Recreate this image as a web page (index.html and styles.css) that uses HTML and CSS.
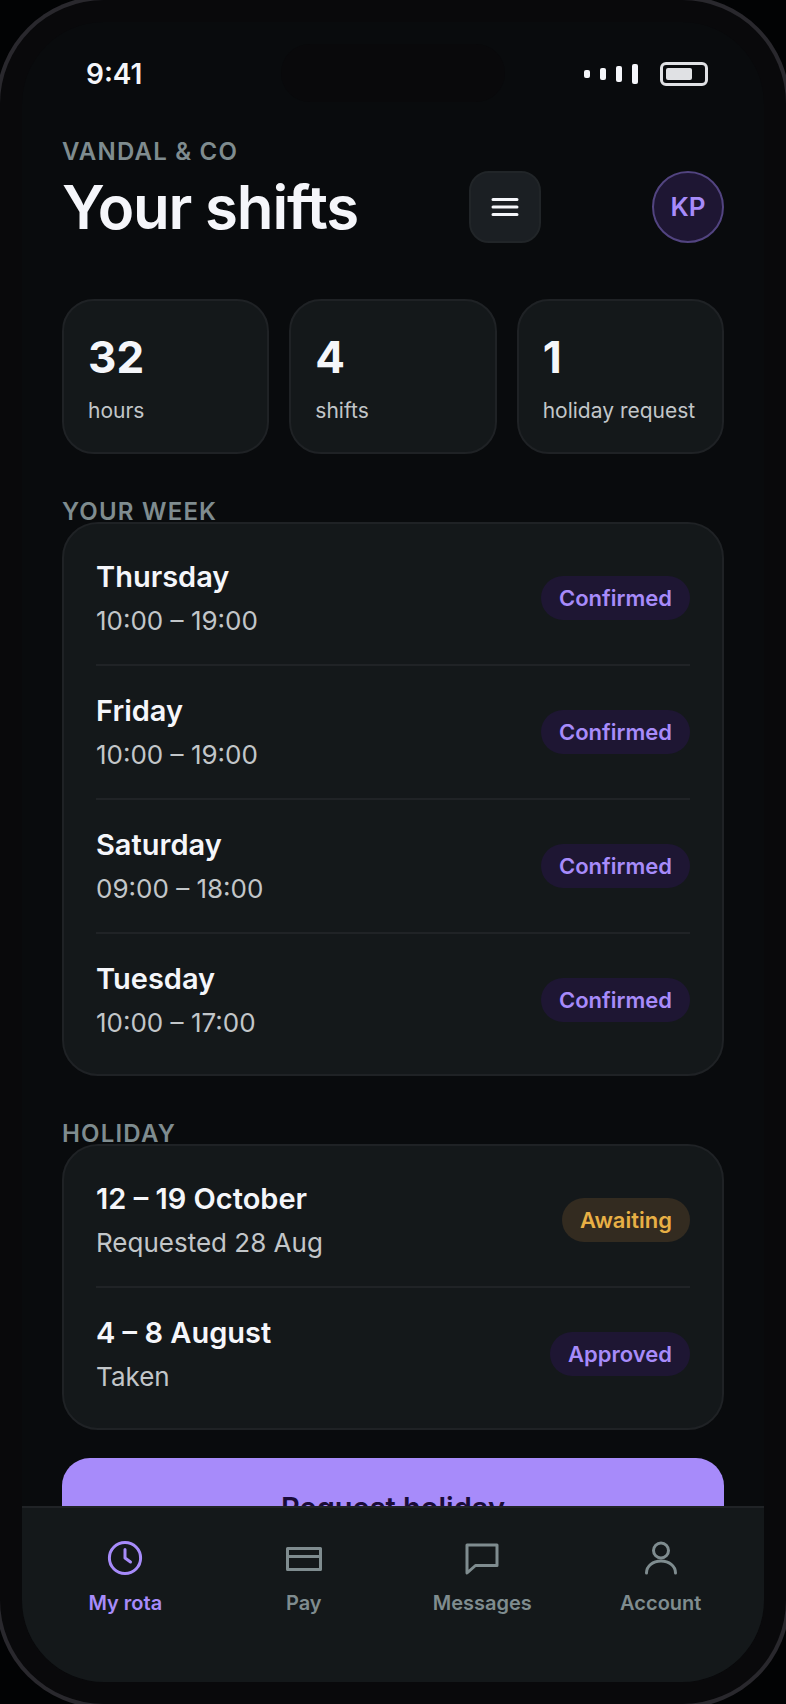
FILE: index.html
```html
<!DOCTYPE html>
<html lang="en">
<head>
    <meta charset="UTF-8">
    <meta name="viewport" content="width=device-width, initial-scale=1.0">
    <title>Your shifts</title>
    <link rel="stylesheet" href="styles.css">
</head>
<body>
    <div class="phone">
        <div class="screen">
            <div class="island"></div>
            <div class="status">
                <span class="time">9:41</span>
                <div class="status-icons">
                    <div class="signal"><i></i><i></i><i></i><i></i></div>
                    <div class="battery"><i></i></div>
                </div>
            </div>

            <main class="content">
                <header class="header">
                    <div>
                        <p class="label">Vandal &amp; Co</p>
                        <h1 class="title">Your shifts</h1>
                    </div>
                    <button class="menu" type="button" aria-label="Menu">
                        <svg width="30" height="20" viewBox="0 0 30 20"><path d="M3 2.500h24M3 10h24M3 17.500h24"/></svg>
                    </button>
                    <div class="avatar">KP</div>
                </header>

                <div class="stats">
                    <div class="stat"><b>32</b><span>hours</span></div>
                    <div class="stat"><b>4</b><span>shifts</span></div>
                    <div class="stat"><b>1</b><span>holiday request</span></div>
                </div>

                <h2 class="label section">Your week</h2>
                <div class="card">
                    <div class="row">
                        <div><p class="name">Thursday</p><p class="sub">10:00 – 19:00</p></div>
                        <span class="pill">Confirmed</span>
                    </div>
                    <div class="row">
                        <div><p class="name">Friday</p><p class="sub">10:00 – 19:00</p></div>
                        <span class="pill">Confirmed</span>
                    </div>
                    <div class="row">
                        <div><p class="name">Saturday</p><p class="sub">09:00 – 18:00</p></div>
                        <span class="pill">Confirmed</span>
                    </div>
                    <div class="row">
                        <div><p class="name">Tuesday</p><p class="sub">10:00 – 17:00</p></div>
                        <span class="pill">Confirmed</span>
                    </div>
                </div>

                <h2 class="label section">Holiday</h2>
                <div class="card">
                    <div class="row">
                        <div><p class="name">12 – 19 October</p><p class="sub">Requested 28 Aug</p></div>
                        <span class="pill pill-wait">Awaiting</span>
                    </div>
                    <div class="row">
                        <div><p class="name">4 – 8 August</p><p class="sub">Taken</p></div>
                        <span class="pill">Approved</span>
                    </div>
                </div>

                <button class="request" type="button">Request holiday</button>
            </main>

            <nav class="tabs">
                <a class="tab active" href="#rota">
                    <svg width="40" height="40" viewBox="0 0 40 40"><circle cx="20" cy="20" r="15.6"/><path d="M20 11.5V20l5.5 4"/></svg>
                    My rota
                </a>
                <a class="tab" href="#pay">
                    <svg width="40" height="40" viewBox="0 0 40 40"><path d="M3.5 10.500h33v21h-33zM3.5 18.500h33"/></svg>
                    Pay
                </a>
                <a class="tab" href="#messages">
                    <svg width="40" height="40" viewBox="0 0 40 40"><path d="M5 7h30v20.500H13.500L5 35z"/></svg>
                    Messages
                </a>
                <a class="tab" href="#account">
                    <svg width="40" height="40" viewBox="0 0 40 40"><circle cx="20" cy="12.500" r="7.500"/><path d="M5.500 35c0-7.200 6.500-12 14.500-12s14.500 4.800 14.500 12"/></svg>
                    Account
                </a>
            </nav>
        </div>
    </div>
</body>
</html>
```
FILE: styles.css
```css
* {
    box-sizing: border-box;
    margin: 0;
}
body {
    background: #020304;
    color: #f5f6fa;
    font-family: Inter, "Liberation Sans", sans-serif;
}
button {
    font-family: inherit;
}

/* Phone shell */
.phone {
    height: 100vh;
    padding: 22px;
    background: #09090b;
    border-radius: 104px;
    box-shadow: 0 0 0 4px #29282d;
}
.screen {
    position: relative;
    display: flex;
    flex-direction: column;
    height: 100%;
    overflow: hidden;
    background: #090b0d;
    border-radius: 82px;
}
.island {
    position: absolute;
    top: 22px;
    left: 50%;
    width: 224px;
    height: 58px;
    margin-left: -112px;
    border-radius: 29px;
    background: #09090b;
}
.status {
    display: flex;
    flex-shrink: 0;
    justify-content: space-between;
    align-items: center;
    height: 104px;
    padding: 0 56px 0 64px;
}
.time {
    font-size: 28px;
    font-weight: 600;
    line-height: 36px;
}
.status-icons {
    display: flex;
    align-items: center;
    gap: 22px;
}
.signal {
    display: flex;
    align-items: center;
    gap: 10px;
}
.signal i {
    width: 6px;
    height: 8px;
    border-radius: 2px;
    background: #f5f6fa;
}
.signal i:nth-child(2) { height: 12px; }
.signal i:nth-child(3) { height: 16px; }
.signal i:nth-child(4) { height: 20px; }
.battery {
    width: 48px;
    height: 24px;
    padding: 3px;
    border: 3px solid #e0e1e4;
    border-radius: 6px;
}
.battery i {
    display: block;
    width: 26px;
    height: 12px;
    border-radius: 2px;
    background: #e0e1e4;
}

/* Scrolling page */
.content {
    flex: 1;
    min-height: 0;
    padding: 15px 40px 0;
    overflow-y: auto;
    scrollbar-width: none;
}
.header {
    display: flex;
    justify-content: space-between;
    align-items: flex-end;
    margin-bottom: 56px;
}
.label {
    color: #7f8c8f;
    font-size: 24px;
    font-weight: 600;
    line-height: 22px;
    letter-spacing: 0.05em;
    text-transform: uppercase;
}
.title {
    margin-top: 8px;
    font-size: 60px;
    font-weight: 600;
    line-height: 72px;
    letter-spacing: -0.02em;
}
.menu {
    display: flex;
    justify-content: center;
    align-items: center;
    width: 72px;
    height: 72px;
    padding: 0;
    background: #1b1f23;
    border: 2px solid #212528;
    border-radius: 20px;
}
.menu svg {
    fill: none;
    stroke: #f5f6fa;
    stroke-width: 3;
    stroke-linecap: round;
}
.avatar {
    width: 72px;
    height: 72px;
    border: 2px solid #524480;
    border-radius: 50%;
    background: #1e1633;
    color: #a78bfa;
    font-size: 26px;
    font-weight: 600;
    line-height: 68px;
    text-align: center;
}

.stats {
    display: grid;
    grid-template-columns: repeat(3, minmax(0, 1fr));
    gap: 20px;
}
.stat {
    display: flex;
    flex-direction: column;
    gap: 12px;
    padding: 30px 24px 25px;
    background: #14181a;
    border: 2px solid #1f2225;
    border-radius: 32px;
}
.stat b {
    font-size: 44px;
    font-weight: 700;
    line-height: 52px;
}
.stat span {
    color: #c2c6c9;
    font-size: 21px;
    line-height: 32px;
    white-space: nowrap;
}

.section {
    margin-top: 48px;
    line-height: 20px;
}
.card {
    padding: 8px 32px;
    background: #14181a;
    border: 2px solid #1f2225;
    border-radius: 36px;
}
.row {
    display: flex;
    justify-content: space-between;
    align-items: center;
    height: 132px;
}
.row + .row {
    height: 134px;
    border-top: 2px solid #202326;
}
.name {
    font-size: 29px;
    font-weight: 600;
    line-height: 36px;
}
.sub {
    margin-top: 10px;
    color: #c2c6c9;
    font-size: 26px;
    line-height: 32px;
}
.pill {
    padding: 0 18px;
    border-radius: 22px;
    background: #1e1633;
    color: #a78bfa;
    font-size: 22px;
    font-weight: 600;
    line-height: 44px;
}
.pill-wait {
    background: #332b20;
    color: #e8b045;
}
.request {
    display: block;
    width: 100%;
    height: 98px;
    margin: 28px 0;
    padding: 0;
    border: 0;
    border-radius: 28px;
    background: #a78bfa;
    color: #1a0b38;
    font-size: 29px;
    font-weight: 600;
}

/* Bottom tabs */
.tabs {
    display: flex;
    flex-shrink: 0;
    height: 176px;
    padding: 30px 14px 0;
    background: #14181a;
    border-top: 2px solid #202326;
}
.tab {
    display: flex;
    flex: 1;
    flex-direction: column;
    align-items: center;
    gap: 12px;
    color: #7f8c8f;
    font-size: 20px;
    font-weight: 600;
    line-height: 26px;
    text-decoration: none;
}
.tab svg {
    fill: none;
    stroke: currentColor;
    stroke-width: 3;
    stroke-linecap: round;
    stroke-linejoin: round;
}
.active {
    color: #a78bfa;
}
```
